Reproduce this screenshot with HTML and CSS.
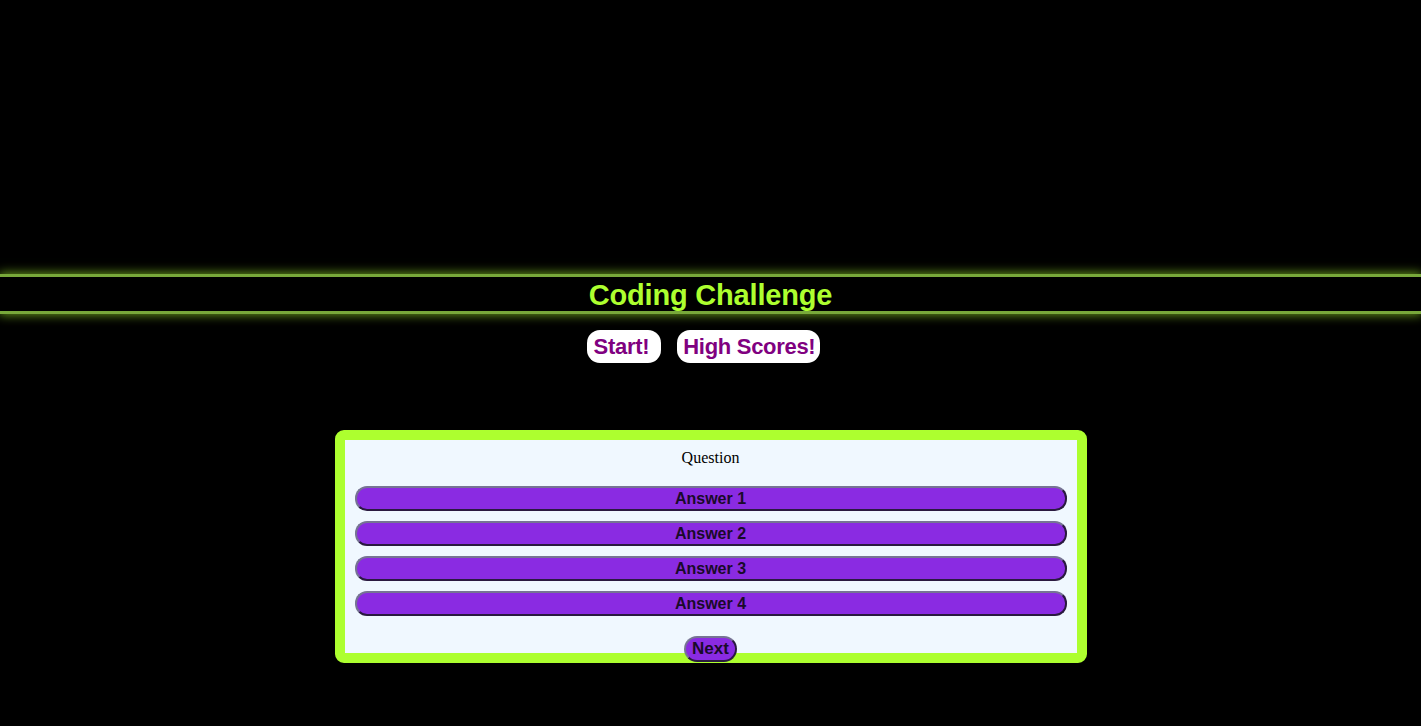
FILE: index.html
```html
<!DOCTYPE html>
<html>
<head>
<meta charset="utf-8">
<link rel="stylesheet" href="styles.css">
</head>
<body>
<header class="banner">
  <h1 class="title">Coding Challenge</h1>
</header>
<nav class="nav">
  <button class="nav-btn nav-btn--start">Start!</button>
  <button class="nav-btn nav-btn--scores">High Scores!</button>
</nav>
<main class="card">
  <p class="question">Question</p>
  <div class="answers">
    <button class="answer">Answer 1</button>
    <button class="answer">Answer 2</button>
    <button class="answer">Answer 3</button>
    <button class="answer">Answer 4</button>
  </div>
  <div class="next-row"><button class="next">Next</button></div>
</main>
</body>
</html>
```
FILE: styles.css
```css
html, body {
  margin: 0;
  padding: 0;
  background: #000;
}
body {
  padding-top: 274px;
  font-family: "Liberation Sans", Arial, sans-serif;
}
.banner {
  height: 34px;
  border-top: 3px solid #78a83a;
  border-bottom: 3px solid #78a83a;
  box-shadow: 0 0 10px 1px rgba(173, 255, 47, 0.6);
  background: #000;
  display: flex;
  align-items: center;
  justify-content: center;
}
.title {
  margin: 0;
  color: #adff2f;
  font-family: "Liberation Sans", Arial, sans-serif;
  font-weight: bold;
  font-size: 29px;
  letter-spacing: -0.2px;
  padding-top: 2px;
}
.nav {
  display: flex;
  justify-content: center;
  gap: 16px;
  margin-top: 16px;
  padding-right: 14px;
}
.nav-btn {
  background: #fff;
  color: #800080;
  border: none;
  border-radius: 13px;
  height: 33px;
  font-family: "Liberation Sans", Arial, sans-serif;
  font-weight: bold;
  font-size: 22px;
  letter-spacing: -0.3px;
}
.nav-btn--start {
  padding: 0 12px 0 7px;
}
.nav-btn--scores {
  padding: 0 5px 0 6px;
}
.card {
  width: 712px;
  height: 213px;
  margin: 67px auto 0;
  border: 10px solid #adff2f;
  border-radius: 9px;
  background: #f0f8ff;
  padding: 0 10px;
  box-sizing: content-box;
}
.question {
  margin: 0;
  padding-top: 9px;
  text-align: center;
  font-family: "Liberation Serif", "Times New Roman", serif;
  font-size: 16px;
  color: #000;
  height: 37px;
}
.answers {
  display: flex;
  flex-direction: column;
  gap: 10px;
}
.answer {
  height: 25px;
  width: 100%;
  background: #8a2be2;
  border: 2px solid #444;
  border-top-color: #767494;
  border-left-color: #767494;
  border-right-color: #2a1a40;
  border-bottom-color: #2a1a40;
  border-radius: 12px;
  font-family: "Liberation Sans", Arial, sans-serif;
  font-weight: bold;
  font-size: 16px;
  color: #1a0a2a;
  padding: 0;
}
.next-row {
  display: flex;
  justify-content: center;
  margin-top: 20px;
}
.next {
  height: 26px;
  padding: 0 6px;
  background: #8a2be2;
  border: 2px solid #444;
  border-top-color: #767494;
  border-left-color: #767494;
  border-right-color: #2a1a40;
  border-bottom-color: #2a1a40;
  border-radius: 13px;
  font-family: "Liberation Sans", Arial, sans-serif;
  font-weight: bold;
  font-size: 17px;
  color: #1a0a2a;
}
```
